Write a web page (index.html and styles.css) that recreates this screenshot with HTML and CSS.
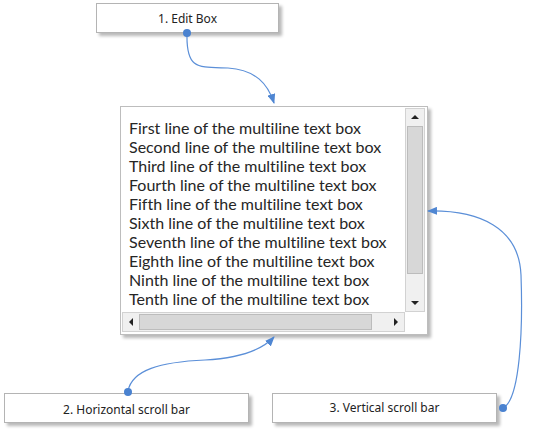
FILE: index.html
```html
<!DOCTYPE html>
<html>
<head>
  <meta charset="utf-8">
  <title>Multiline text box</title>
  <link rel="stylesheet" href="styles.css">
</head>
<body>

<div class="canvas">

    <!-- connectors -->
    <svg class="links" width="536" height="431" viewBox="0 0 536 431">
        <defs>
            <marker id="head" markerWidth="10" markerHeight="8" refX="9" refY="4" orient="auto" markerUnits="userSpaceOnUse">
                <path class="head" d="M0,0 L10,4 L0,8 Z"/>
            </marker>
        </defs>
        <path class="wire" d="M187,33 C186,70 198,67 228,68 C256,70 268,84 274,103" marker-end="url(#head)"/>
        <path class="wire" d="M128,391 C132,370 160,362 205,360 C240,358 262,350 274,337" marker-end="url(#head)"/>
        <path class="wire" d="M503,408 C520,400 523,330 521,275 C519,228 480,210 428,211" marker-end="url(#head)"/>
        <circle cx="187" cy="33" r="4"/>
        <circle cx="128" cy="392" r="4"/>
        <circle cx="503" cy="408" r="4"/>
    </svg>

    <div class="note note-edit">1. Edit Box</div>

    <div class="editbox">
        <div class="textarea">
            <div>First line of the multiline text box</div>
            <div>Second line of the multiline text box</div>
            <div>Third line of the multiline text box</div>
            <div>Fourth line of the multiline text box</div>
            <div>Fifth line of the multiline text box</div>
            <div>Sixth line of the multiline text box</div>
            <div>Seventh line of the multiline text box</div>
            <div>Eighth line of the multiline text box</div>
            <div>Ninth line of the multiline text box</div>
            <div>Tenth line of the multiline text box</div>
        </div>
        <div class="vscroll">
            <div class="btn"><span class="arrow up"></span></div>
            <div class="thumb"></div>
            <div class="track"></div>
            <div class="btn"><span class="arrow down"></span></div>
        </div>
        <div class="hscroll">
            <div class="btn"><span class="arrow left"></span></div>
            <div class="thumb"></div>
            <div class="track"></div>
            <div class="btn"><span class="arrow right"></span></div>
        </div>
        <div class="corner"></div>
    </div>

    <div class="note note-hscroll">2. Horizontal scroll bar</div>
    <div class="note note-vscroll">3. Vertical scroll bar</div>

</div>

</body>
</html>
```

FILE: styles.css
```css
body {
  margin: 0;
  background: #ffffff;
  font-family: "Noto Sans", "Open Sans", sans-serif;
  color: #222222;
}

.canvas {
  position: relative;
  width: 536px;
  height: 431px;
  overflow: hidden;
}

.links {
  position: absolute;
  left: 0;
  top: 0;
  z-index: 2;
}
.links .wire {
  fill: none;
  stroke: #5b8fd8;
  stroke-width: 1.2;
}
.links .head {
  fill: #4f86d2;
  stroke: none;
}
.links circle {
  fill: #4a82d0;
}

/* callout boxes */
.note {
  position: absolute;
  box-sizing: border-box;
  height: 30px;
  background: #ffffff;
  border: 1px solid #b4b4b4;
  box-shadow: 3px 3px 3px rgba(0, 0, 0, 0.28);
  display: flex;
  align-items: center;
  justify-content: center;
  font-size: 12px;
}
.note-edit {
  left: 96px;
  top: 3px;
  width: 183px;
}
.note-hscroll {
  left: 4px;
  top: 393px;
  width: 245px;
  padding-top: 3px;
}
.note-vscroll {
  left: 272px;
  top: 393px;
  width: 225px;
  padding-bottom: 1px;
}

/* the edit box */
.editbox {
  position: absolute;
  left: 120px;
  top: 106px;
  width: 308px;
  height: 229px;
  box-sizing: border-box;
  background: #ffffff;
  border: 1px solid #bdbdbd;
  padding: 1px 2px 2px 1px;
  box-shadow: 3px 3px 3px rgba(0, 0, 0, 0.28);
  display: grid;
  grid-template-columns: 1fr 20px;
  grid-template-rows: 1fr 20px;
}

.textarea {
  padding: 10px 0 0 7px;
  font-family: Lato, "Noto Sans", sans-serif;
  font-size: 16px;
  line-height: 19px;
  font-variant-ligatures: none;
  white-space: nowrap;
  overflow: hidden;
  color: #262626;
}

.vscroll, .hscroll {
  box-sizing: border-box;
  background: #f0f0f0;
  border: 1px solid #d2d2d2;
  display: flex;
}
.vscroll {
  flex-direction: column;
  padding: 0 1px;
}
.hscroll {
  flex-direction: row;
  padding: 1px 0;
}
.vscroll .btn {
  height: 17px;
}
.hscroll .btn {
  width: 16px;
}
.btn {
  display: flex;
  align-items: center;
  justify-content: center;
}
.thumb {
  box-sizing: border-box;
  background: #d7d7d7;
  border: 1px solid #bcbcbc;
}
.vscroll .thumb {
  height: 148px;
}
.hscroll .thumb {
  width: 233px;
}
.track {
  flex: 1;
}
.corner {
  background: #ffffff;
}

.arrow {
  width: 0;
  height: 0;
  border: 4px solid transparent;
}
.arrow.up {
  border-bottom-color: #222;
  border-top-width: 0;
  margin-top: -1px;
}
.arrow.down {
  border-top-color: #222;
  border-bottom-width: 0;
}
.arrow.left {
  border-right-color: #222;
  border-left-width: 0;
}
.arrow.right {
  border-left-color: #222;
  border-right-width: 0;
}
```
